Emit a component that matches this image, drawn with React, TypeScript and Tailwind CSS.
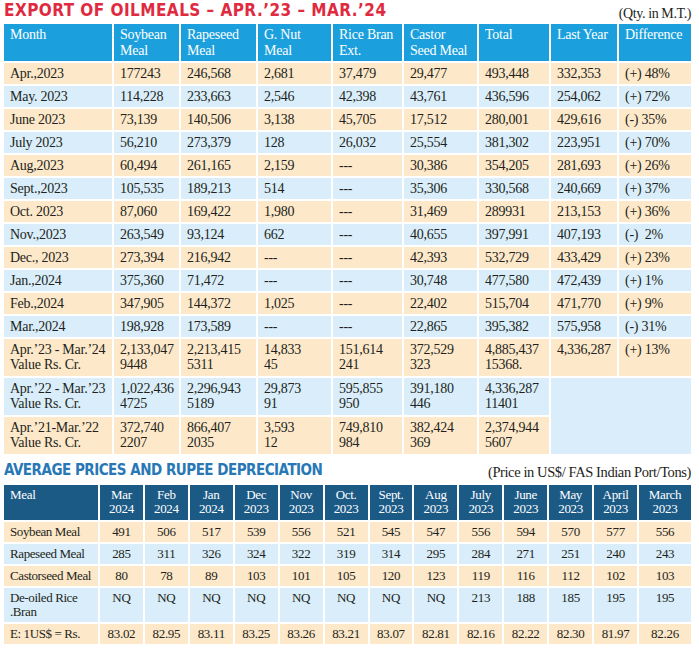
import React from 'react';

const serif = { fontFamily: '"Liberation Serif", "DejaVu Serif", serif' };
const heading = { fontFamily: '"Liberation Sans Narrow", "DejaVu Sans Condensed", "Liberation Sans", sans-serif' };

const exportHead = ['Month', 'Soybean Meal', 'Rapeseed Meal', 'G. Nut Meal', 'Rice Bran Ext.', 'Castor Seed Meal', 'Total', 'Last Year', 'Difference'];

const exportRows = [
  ['Apr.,2023', '177243', '246,568', '2,681', '37,479', '29,477', '493,448', '332,353', '(+) 48%'],
  ['May. 2023', '114,228', '233,663', '2,546', '42,398', '43,761', '436,596', '254,062', '(+) 72%'],
  ['June 2023', '73,139', '140,506', '3,138', '45,705', '17,512', '280,001', '429,616', '(-) 35%'],
  ['July 2023', '56,210', '273,379', '128', '26,032', '25,554', '381,302', '223,951', '(+) 70%'],
  ['Aug,2023', '60,494', '261,165', '2,159', '---', '30,386', '354,205', '281,693', '(+) 26%'],
  ['Sept.,2023', '105,535', '189,213', '514', '---', '35,306', '330,568', '240,669', '(+) 37%'],
  ['Oct. 2023', '87,060', '169,422', '1,980', '---', '31,469', '289931', '213,153', '(+) 36%'],
  ['Nov.,2023', '263,549', '93,124', '662', '---', '40,655', '397,991', '407,193', '(-)  2%'],
  ['Dec., 2023', '273,394', '216,942', '---', '---', '42,393', '532,729', '433,429', '(+) 23%'],
  ['Jan.,2024', '375,360', '71,472', '---', '---', '30,748', '477,580', '472,439', '(+) 1%'],
  ['Feb.,2024', '347,905', '144,372', '1,025', '---', '22,402', '515,704', '471,770', '(+) 9%'],
  ['Mar.,2024', '198,928', '173,589', '---', '---', '22,865', '395,382', '575,958', '(-) 31%'],
];

const summaryRows = [
  [['Apr.’23 - Mar.’24', 'Value Rs. Cr.'], ['2,133,047', '9448'], ['2,213,415', '5311'], ['14,833', '45'], ['151,614', '241'], ['372,529', '323'], ['4,885,437', '15368.'], ['4,336,287'], ['(+) 13%']],
  [['Apr.’22 - Mar.’23', 'Value Rs. Cr.'], ['1,022,436', '4725'], ['2,296,943', '5189'], ['29,873', '91'], ['595,855', '950'], ['391,180', '446'], ['4,336,287', '11401']],
  [['Apr.’21-Mar.’22', 'Value Rs. Cr.'], ['372,740', '2207'], ['866,407', '2035'], ['3,593', '12'], ['749,810', '984'], ['382,424', '369'], ['2,374,944', '5607']],
];

const priceHead = [['Mar', '2024'], ['Feb', '2024'], ['Jan', '2024'], ['Dec', '2023'], ['Nov', '2023'], ['Oct.', '2023'], ['Sept.', '2023'], ['Aug', '2023'], ['July', '2023'], ['June', '2023'], ['May', '2023'], ['April', '2023'], ['March', '2023']];

const priceRows = [
  { meal: ['Soybean Meal'], values: ['491', '506', '517', '539', '556', '521', '545', '547', '556', '594', '570', '577', '556'] },
  { meal: ['Rapeseed Meal'], values: ['285', '311', '326', '324', '322', '319', '314', '295', '284', '271', '251', '240', '243'] },
  { meal: ['Castorseed Meal'], values: ['80', '78', '89', '103', '101', '105', '120', '123', '119', '116', '112', '102', '103'] },
  { meal: ['De-oiled Rice', '.Bran'], values: ['NQ', 'NQ', 'NQ', 'NQ', 'NQ', 'NQ', 'NQ', 'NQ', '213', '188', '185', '195', '195'] },
  { meal: ['E: 1US$ = Rs.'], values: ['83.02', '82.95', '83.11', '83.25', '83.26', '83.21', '83.07', '82.81', '82.16', '82.22', '82.30', '81.97', '82.26'] },
];

const peach = 'bg-[#fde8c9]';
const sky = 'bg-[#d9eefa]';

const App: React.FC = () => {
  return (
    <div className="w-[699px] h-[653px] bg-white px-[4px] text-[#231f20] overflow-hidden" style={serif}>
      {/* Export table title */}
      <div className="h-[24px] w-[687px] flex justify-between items-start">
        <h1 className="text-[17px] font-bold leading-[20px] text-[#df2a3f] tracking-[0.45px]" style={heading}>
          EXPORT OF OILMEALS – APR.’23 – MAR.’24
        </h1>
        <span className="text-[14px] leading-[16px] pt-[6px] tracking-[-0.4px]">(Qty. in M.T.)</span>
      </div>

      <div className="grid grid-cols-[108px_65px_75px_73px_69px_73px_70px_66px_72px] gap-[2px] w-[687px] text-[14px] tracking-[-0.25px]">
        {exportHead.map((h) => (
          <div key={h} className="h-[37px] bg-[#1ba0dd] text-white px-[6px] pt-[3px] leading-[16px]">
            {h}
          </div>
        ))}

        {exportRows.map((row, i) =>
          row.map((cell, j) => (
            <div
              key={`${i}-${j}`}
              className={`h-[21px] px-[6px] flex items-center whitespace-pre leading-none ${i % 2 === 0 ? peach : sky}`}
            >
              {cell}
            </div>
          ))
        )}

        {summaryRows.map((row, i) => (
          <React.Fragment key={`s${i}`}>
            {row.map((lines, j) => (
              <div
                key={`s${i}-${j}`}
                className={`h-[37px] px-[6px] pt-[3px] leading-[15px] ${i % 2 === 0 ? peach : sky}`}
              >
                {lines.map((l) => (
                  <div key={l}>{l}</div>
                ))}
              </div>
            ))}
            {i === 1 && <div className={`row-span-2 col-span-2 ${sky}`} />}
          </React.Fragment>
        ))}
      </div>

      {/* Average prices title */}
      <div className="h-[31px] w-[687px] flex justify-between items-end pb-[5px]">
        <h2 className="text-[15px] font-bold leading-[20px] text-[#2878b6] tracking-[-0.5px]" style={heading}>
          AVERAGE PRICES AND RUPEE DEPRECIATION
        </h2>
        <span className="text-[14.5px] leading-[16px] tracking-[-0.4px]">(Price in US$/ FAS Indian Port/Tons)</span>
      </div>

      <div className="grid grid-cols-[94px_repeat(12,minmax(0,1fr))_52px] gap-[2px] w-[687px] text-[13px] tracking-[-0.3px]">
        <div className="h-[35px] bg-[#1c5a86] text-white px-[6px] pt-[3px] leading-[14px]">Meal</div>
        {priceHead.map(([m, y]) => (
          <div key={m} className="h-[35px] bg-[#1c5a86] text-white pt-[3px] leading-[14px] text-center">
            <div>{m}</div>
            <div>{y}</div>
          </div>
        ))}

        {priceRows.map((row, i) => {
          const tall = row.meal.length > 1;
          const bg = i % 2 === 0 ? peach : sky;
          return (
            <React.Fragment key={row.meal[0]}>
              <div className={`${tall ? 'h-[34px] pt-[3px]' : 'h-[20px] flex flex-col justify-center'} px-[6px] leading-[14px] whitespace-nowrap tracking-[-0.4px] ${bg}`}>
                {row.meal.map((m) => (
                  <div key={m}>{m}</div>
                ))}
              </div>
              {row.values.map((v, j) => (
                <div
                  key={j}
                  className={`${tall ? 'h-[34px] pt-[3px]' : 'h-[20px] flex items-center justify-center'} text-center leading-[14px] ${bg}`}
                >
                  {v}
                </div>
              ))}
            </React.Fragment>
          );
        })}
      </div>
    </div>
  );
};

export default App;
